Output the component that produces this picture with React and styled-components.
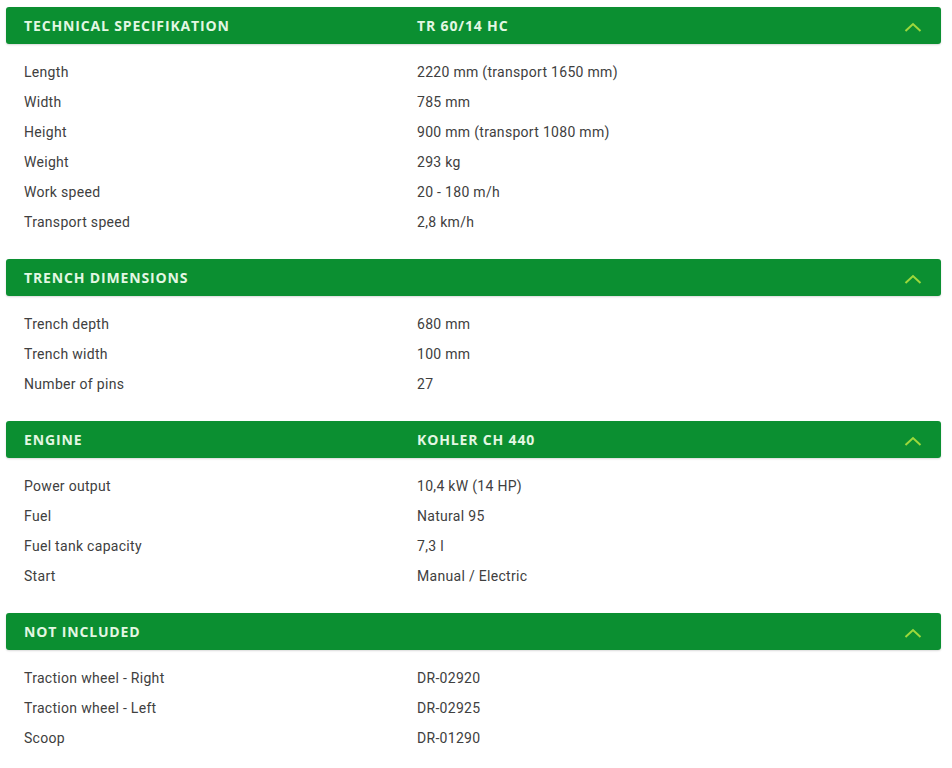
import React from 'react';
import styled, { createGlobalStyle } from 'styled-components';

const GlobalStyle = createGlobalStyle`
  body {
    margin: 0;
    background: #ffffff;
    font-family: Roboto, "Liberation Sans", sans-serif;
  }
`;

const Page = styled.div`
  padding: 7px 11px 0 6px;
`;

const Section = styled.section`
  display: flex;
  flex-direction: column;
`;

const Header = styled.div`
  display: grid;
  grid-template-columns: 393px 1fr auto;
  align-items: center;
  height: 37px;
  padding: 0 19px 0 18px;
  background: #0b8f31;
  border-radius: 3px;
  box-shadow: 0 1px 2px rgba(0, 0, 0, 0.15);
`;

const HeaderText = styled.span`
  font-family: "Open Sans", "Liberation Sans", sans-serif;
  font-weight: 700;
  font-size: 14px;
  letter-spacing: 0.85px;
  color: #e3f7e3;
  text-transform: uppercase;
  margin-top: -1px;
`;

const Body = styled.div`
  padding: 13px 0 22px 18px;
`;

const Row = styled.div`
  display: grid;
  grid-template-columns: 393px 1fr;
  align-items: center;
  height: 30px;
  font-size: 14px;
  letter-spacing: 0.3px;
  color: #404040;
`;

const ChevronIcon = styled.svg`
  margin-top: 3px;
`;

const Chevron = () => (
  <ChevronIcon width="18" height="10" viewBox="0 0 18 10">
    <path d="M1.5 9 L9 2 L16.5 9" fill="none" stroke="#9ed83c" strokeWidth="2" />
  </ChevronIcon>
);

const sections = [
  {
    title: 'Technical specifikation',
    model: 'TR 60/14 HC',
    rows: [
      ['Length', '2220 mm (transport 1650 mm)'],
      ['Width', '785 mm'],
      ['Height', '900 mm (transport 1080 mm)'],
      ['Weight', '293 kg'],
      ['Work speed', '20 - 180 m/h'],
      ['Transport speed', '2,8 km/h'],
    ],
  },
  {
    title: 'Trench dimensions',
    model: '',
    rows: [
      ['Trench depth', '680 mm'],
      ['Trench width', '100 mm'],
      ['Number of pins', '27'],
    ],
  },
  {
    title: 'Engine',
    model: 'Kohler CH 440',
    rows: [
      ['Power output', '10,4 kW (14 HP)'],
      ['Fuel', 'Natural 95'],
      ['Fuel tank capacity', '7,3 l'],
      ['Start', 'Manual / Electric'],
    ],
  },
  {
    title: 'Not included',
    model: '',
    rows: [
      ['Traction wheel - Right', 'DR-02920'],
      ['Traction wheel - Left', 'DR-02925'],
      ['Scoop', 'DR-01290'],
    ],
  },
];

export default function App() {
  return (
    <>
      <GlobalStyle />
      <Page>
        {sections.map((s) => (
          <Section key={s.title}>
            <Header>
              <HeaderText>{s.title}</HeaderText>
              <HeaderText>{s.model}</HeaderText>
              <Chevron />
            </Header>
            <Body>
              {s.rows.map(([label, value]) => (
                <Row key={label}>
                  <span>{label}</span>
                  <span>{value}</span>
                </Row>
              ))}
            </Body>
          </Section>
        ))}
      </Page>
    </>
  );
}
